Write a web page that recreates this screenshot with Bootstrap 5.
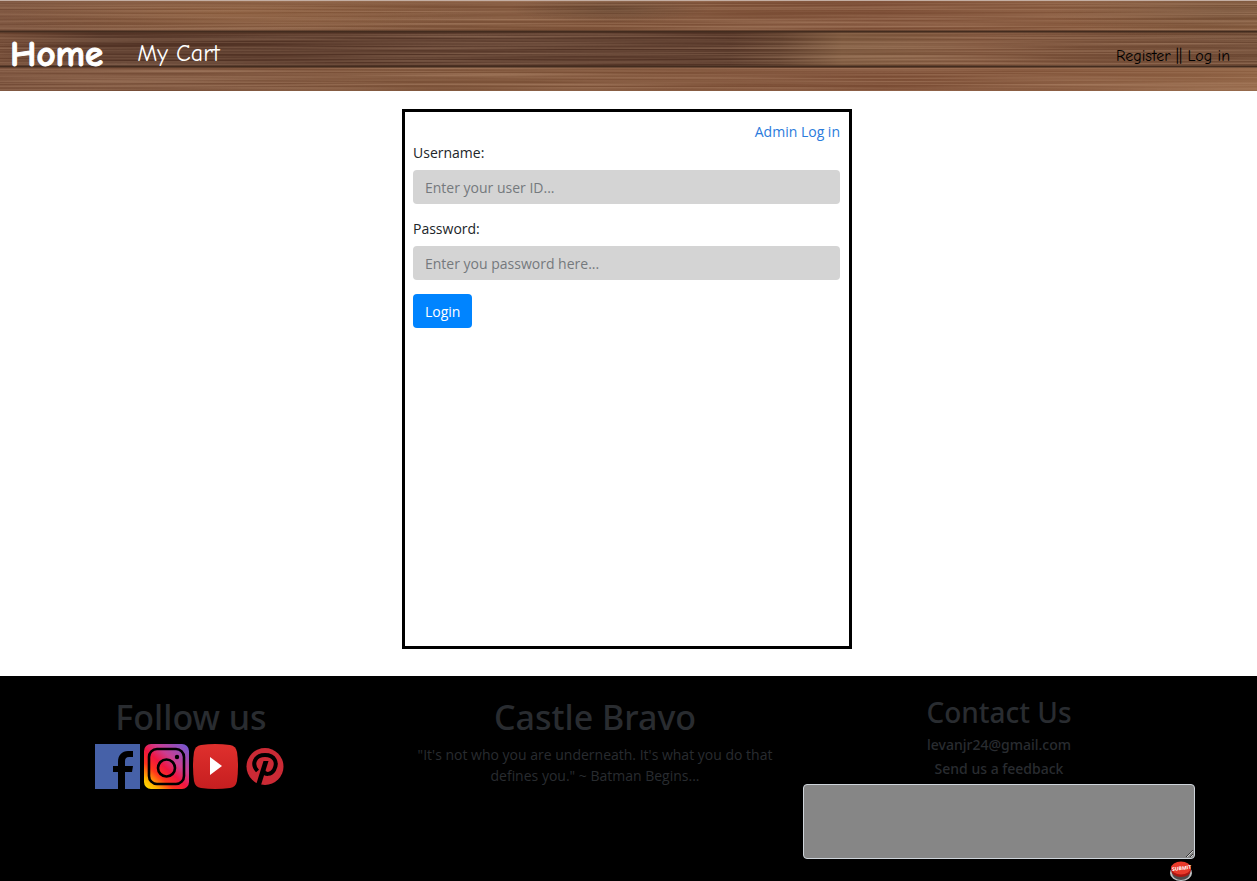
<!DOCTYPE html>
<html lang="en">
<head>
<meta charset="utf-8">
<meta name="viewport" content="width=device-width, initial-scale=1">
<title>Castle Bravo - Log in</title>
<link href="https://cdn.jsdelivr.net/npm/bootstrap@5.3.0/dist/css/bootstrap.min.css" rel="stylesheet">
<style>
:root { font-size: 14px; }
body { font-family: "Segoe UI", "Open Sans", sans-serif; color: #212529; }
a { text-decoration: none; }

/* wooden plank header */
.wood-bar {
  height: 91px;
  padding: 18px 27px 0 10px;
  border-top: 1px solid #c3aea3;
  font-family: "Comic Sans MS", "Comic Neue", cursive;
  background-color: #80593f;
  background-image:
    linear-gradient(transparent 29px, #432c1f 30px, #432c1f 31px, transparent 32px, transparent 64px, #432c1f 65px, #432c1f 66px, transparent 67px),
    url("data:image/svg+xml,%3Csvg xmlns='http://www.w3.org/2000/svg' width='2000' height='90'%3E%3Cfilter id='g' x='0' y='0' width='100%25' height='100%25'%3E%3CfeTurbulence type='fractalNoise' baseFrequency='0.003 0.6' numOctaves='2' seed='8'/%3E%3CfeColorMatrix values='0 0 0 0 .7 0 0 0 0 .45 0 0 0 0 .3 .7 0 0 0 -.23'/%3E%3C/filter%3E%3Crect width='2000' height='90' filter='url(%23g)'/%3E%3C/svg%3E"),
    radial-gradient(ellipse 100px 14px at 610px 8px, #5a3c28cc, transparent),
    radial-gradient(ellipse 180px 30px at 1230px 10px, #68462fcc, transparent),
    radial-gradient(ellipse 240px 24px at 230px 12px, #a06c4366, transparent),
    linear-gradient(90deg, #6a432f 0, #523325 8%, #523325 28%, #523325 58%, #5e3e2c 62%, #7a563c 67%, #7a5038 78%, #6c4833 100%),
    linear-gradient(90deg, #744c37, #7c5238 40%, #7a4c34 70%, #8d6042 100%);
  background-size: auto, auto, auto, auto, auto, 100% 34px, auto;
  background-position: 0 0, 0 0, 0 0, 0 0, 0 0, 0 31px, 0 0;
  background-repeat: no-repeat;
}
.brand-link { font-size: 37px; font-weight: 700; line-height: 70px; color: #fff; -webkit-text-stroke: 1px #fff; }
.cart-link { margin-left: 34px; font-size: 24px; font-weight: 400; line-height: 68px; color: #fff; }
.account-links { font-size: 16px; line-height: 74px; color: #000; }
.account-links a { color: #000; }

.page-main { padding: 18px 3px 27px 0; }
.login-panel { width: 450px; max-width: 100%; min-height: 540px; border: 3px solid #000; padding: 9px 9px 10px 8px; }
.login-panel label { margin-bottom: 7px; }
.login-panel a { color: #2a7bdc; }
.login-panel .form-control { height: 34px; padding: 6px 12px; font-size: 14px; background: #d4d4d4; border: 0; border-radius: 4px; }
.login-panel .form-control::placeholder { color: #75797d; }
.btn-login { height: 34px; padding: 6px 12px; font-size: 14px; line-height: 21px; color: #fff; background: #0084ff; border: 0; border-radius: 4px; }

.site-footer { background: #000; color: #292c30; min-height: 205px; padding-right: 56px; overflow: hidden; }
.site-footer .row { margin: 0 0 0 -11px; }
.site-footer .row > div { padding: 20px 6px 0; }
.footer-title, .footer-subtitle, .contact-line { font-family: "Segoe UI", "Noto Sans", sans-serif; font-weight: 500; }
.footer-title { font-size: 34px; line-height: 42px; margin-bottom: 6px; }
.footer-subtitle { font-size: 28px; line-height: 33px; margin-bottom: 7px; }
.contact-line { font-size: 14px; line-height: 17px; margin-bottom: 7px; }
.quote-text { max-width: 360px; line-height: 21px; }
.social-links { gap: 4px; }
.social-links svg, .submit-btn svg { display: block; }
.feedback-box { height: 75px; border: 1px solid #ced4da; border-radius: 4px; background: #868686; }
.submit-btn { width: 24px; height: 22px; margin-right: 2px; padding: 0; border: 0; background: none; }
</style>
</head>
<body>
<nav class="wood-bar d-flex align-items-start">
  <a class="brand-link" href="#">Home</a>
  <a class="cart-link" href="#">My Cart</a>
  <div class="account-links ms-auto"><a href="#">Register</a> || <a href="#">Log in</a></div>
</nav>

<main class="page-main d-flex justify-content-center">
  <form class="login-panel">
    <div class="text-end"><a href="#">Admin Log in</a></div>
    <label class="d-block" for="username">Username:</label>
    <input class="form-control mb-3" type="text" id="username" placeholder="Enter your user ID...">
    <label class="d-block" for="password">Password:</label>
    <input class="form-control mb-3" type="password" id="password" placeholder="Enter you password here...">
    <button class="btn btn-login" type="submit">Login</button>
  </form>
</main>

<footer class="site-footer">
  <div class="row">
    <div class="col-4 text-center">
      <h1 class="footer-title">Follow us</h1>
      <div class="social-links d-flex justify-content-center">
        <a href="#" aria-label="Facebook"><svg width="45" height="45" viewBox="0 0 45 45"><path fill="#4661a8" d="M0 0h45v45H0z"/><path d="M23 45V28h-5v-6h5v-4c0-7 4-11 10-11h5v6h-4c-3 0-4 2-4 4v5h8l-1 6h-7v17z"/></svg></a>
        <a href="#" aria-label="Instagram"><svg width="45" height="45" viewBox="0 0 45 45"><defs><linearGradient id="ig" x1="0" y1="1" x2=".9" y2="0"><stop stop-color="#ffe500"/><stop offset=".15" stop-color="#ffb500"/><stop offset=".33" stop-color="#ff351b"/><stop offset=".5" stop-color="#f01540"/><stop offset=".68" stop-color="#cb3d91"/><stop offset="1" stop-color="#7756ce"/></linearGradient></defs><rect width="45" height="45" rx="7" fill="url(#ig)"/><g fill="none" stroke="#000" stroke-width="2.6"><rect x="5" y="5" width="35" height="35" rx="8"/><circle cx="22.500" cy="24" r="8.500"/></g><circle cx="33" cy="13" r="2.200"/></svg></a>
        <a href="#" aria-label="YouTube"><svg width="45" height="45" viewBox="0 0 45 45"><defs><linearGradient id="yt" x1="0" y1="0" x2="0" y2="1"><stop stop-color="#df302d"/><stop offset="1" stop-color="#c61e20"/></linearGradient></defs><path fill="url(#yt)" d="M8 1Q22 -1 37 1Q43 2 44 8Q46 22 44 37Q43 43 37 44Q22 46 8 44Q2 43 1 37Q-1 22 1 8Q2 2 8 1z"/><path fill="#fff" d="M17 13v18l12-9z"/></svg></a>
        <a href="#" aria-label="Pinterest"><svg width="45" height="45" viewBox="0 0 45 45"><circle cx="23" cy="22.500" r="18.500" fill="#cb2a35"/><path fill="none" stroke="#000" stroke-width="4" d="M15.500 27C9 20 13 11 23 11C33 11 36 19 32 26C29 31 23 31 21 27"/><path d="M21.500 17h5L19 41h-5z"/></svg></a>
      </div>
    </div>
    <div class="col-4 text-center">
      <h1 class="footer-title">Castle Bravo</h1>
      <p class="quote-text mx-auto">"It's not who you are underneath. It's what you do that defines you." ~ Batman Begins...</p>
    </div>
    <div class="col-4 text-center">
      <h2 class="footer-subtitle">Contact Us</h2>
      <h6 class="contact-line">levanjr24@gmail.com</h6>
      <h6 class="contact-line"><label for="feedback">Send us a feedback</label></h6>
      <textarea class="form-control feedback-box" id="feedback"></textarea>
      <div class="text-end"><button class="submit-btn" type="button" aria-label="Submit"><svg width="24" height="22" viewBox="0 0 24 22"><ellipse cx="12" cy="14" rx="11" ry="8" fill="#bfc4c6"/><ellipse cx="12" cy="14" rx="9" ry="7" fill="#504b4b"/><ellipse cx="12" cy="11" rx="10" ry="7" fill="#ab1712"/><ellipse cx="12" cy="9" rx="10" ry="6.500" fill="#e93a2b"/><text x="3" y="11" font-size="5" font-weight="700" fill="#fff" transform="rotate(-7 12 9)">SUBMIT</text></svg></button></div>
    </div>
  </div>
</footer>
<script src="https://cdn.jsdelivr.net/npm/bootstrap@5.3.0/dist/js/bootstrap.bundle.min.js"></script>
</body>
</html>
